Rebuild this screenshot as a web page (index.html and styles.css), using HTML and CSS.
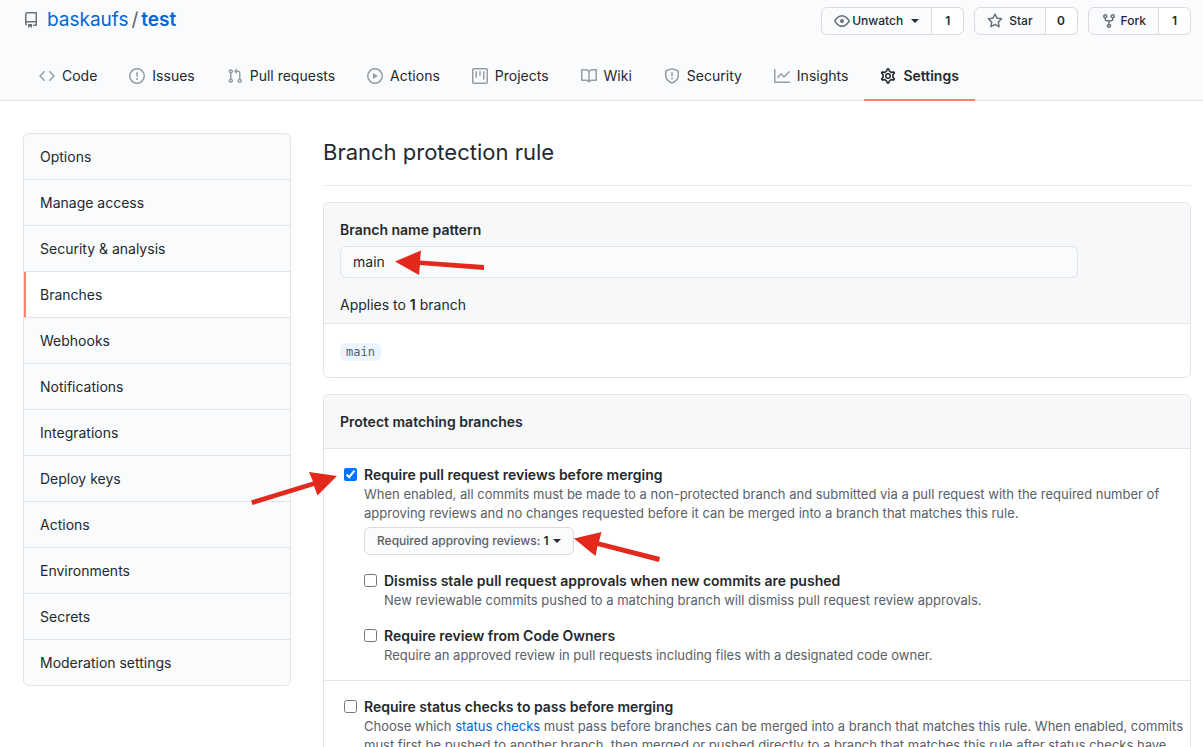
FILE: index.html
```html
<!DOCTYPE html>
<html lang="en">
<head>
<meta charset="utf-8">
<title>Branch protection rule · baskaufs/test</title>
<link rel="stylesheet" href="styles.css">
</head>
<body>
<header class="repo-header">
  <div class="repo-bar">
    <div class="repo-title">
      <svg class="icon repo-icon" viewBox="0 0 16 16"><path d="M2 2.5A2.5 2.5 0 014.5 0h8.75a.75.75 0 01.75.75v12.5a.75.75 0 01-.75.75h-2.5a.75.75 0 110-1.5h1.75v-2h-8a1 1 0 00-.714 1.7.75.75 0 01-1.072 1.05A2.495 2.495 0 012 11.5v-9zm10.5-1V9h-8c-.356 0-.694.074-1 .208V2.5a1 1 0 011-1h8zM5 12.25v3.25a.25.25 0 00.4.2l1.45-1.087a.25.25 0 01.3 0L8.6 15.7a.25.25 0 00.4-.2v-3.25a.25.25 0 00-.25-.25h-3.5a.25.25 0 00-.25.25z"/></svg>
      <a href="#">baskaufs</a><span class="slash">/</span><a class="repo-name" href="#">test</a>
    </div>
    <div class="repo-actions">
      <div class="btn-group"><button class="btn watch" type="button"><svg class="icon" viewBox="0 0 16 16"><path d="M1.679 7.932c.412-.621 1.242-1.75 2.366-2.717C5.175 4.242 6.527 3.5 8 3.5c1.473 0 2.824.742 3.955 1.715 1.124.967 1.954 2.096 2.366 2.717a.119.119 0 010 .136c-.412.621-1.242 1.75-2.366 2.717C10.825 11.758 9.473 12.5 8 12.5c-1.473 0-2.824-.742-3.955-1.715C2.92 9.818 2.09 8.69 1.679 8.068a.119.119 0 010-.136zM8 2c-1.981 0-3.67.992-4.933 2.078C1.797 5.169.88 6.423.43 7.1a1.619 1.619 0 000 1.798c.45.678 1.367 1.932 2.637 3.024C4.329 13.008 6.019 14 8 14c1.981 0 3.67-.992 4.933-2.078 1.27-1.091 2.187-2.345 2.637-3.023a1.619 1.619 0 000-1.798c-.45-.678-1.367-1.932-2.637-3.023C11.671 2.992 9.981 2 8 2zm0 8a2 2 0 100-4 2 2 0 000 4z"/></svg>Unwatch<span class="caret"></span></button><a class="count" href="#">1</a></div>
      <div class="btn-group"><button class="btn star" type="button"><svg class="icon" viewBox="0 0 16 16"><path d="M8 .25a.75.75 0 01.673.418l1.882 3.815 4.21.612a.75.75 0 01.416 1.279l-3.046 2.97.719 4.192a.75.75 0 01-1.088.791L8 12.347l-3.766 1.98a.75.75 0 01-1.088-.79l.72-4.194L.818 6.374a.75.75 0 01.416-1.28l4.21-.611L7.327.668A.75.75 0 018 .25zm0 2.445L6.615 5.5a.75.75 0 01-.564.41l-3.097.45 2.24 2.184a.75.75 0 01.216.664l-.528 3.084 2.769-1.456a.75.75 0 01.698 0l2.77 1.456-.53-3.084a.75.75 0 01.216-.664l2.24-2.183-3.096-.45a.75.75 0 01-.564-.41L8 2.694v.001z"/></svg>Star</button><a class="count" href="#">0</a></div>
      <div class="btn-group"><button class="btn fork" type="button"><svg class="icon" viewBox="0 0 16 16"><path d="M5 3.25a.75.75 0 11-1.5 0 .75.75 0 011.5 0zm0 2.122a2.25 2.25 0 10-1.5 0v.878A2.25 2.25 0 005.75 8.5h1.5v2.128a2.251 2.251 0 101.5 0V8.5h1.5a2.25 2.25 0 002.25-2.25v-.878a2.25 2.25 0 10-1.5 0v.878a.75.75 0 01-.75.75h-4.5A.75.75 0 015 6.25v-.878zm3.75 7.378a.75.75 0 11-1.5 0 .75.75 0 011.5 0zm3-8.75a.75.75 0 100-1.5.75.75 0 000 1.5z"/></svg>Fork</button><a class="count" href="#">1</a></div>
    </div>
  </div>
  <nav class="tabs" aria-label="Repository">
    <a class="tab" href="#"><svg class="icon" viewBox="0 0 16 16"><path d="M4.72 3.22a.75.75 0 011.06 1.06L2.06 8l3.72 3.72a.75.75 0 11-1.06 1.06L.47 8.53a.75.75 0 010-1.06l4.25-4.25zm6.56 0a.75.75 0 10-1.06 1.06L13.94 8l-3.72 3.72a.75.75 0 101.06 1.06l4.25-4.25a.75.75 0 000-1.06l-4.25-4.25z"/></svg>Code</a>
    <a class="tab" href="#"><svg class="icon" viewBox="0 0 16 16"><path d="M8 1.5a6.5 6.5 0 100 13 6.5 6.5 0 000-13zM0 8a8 8 0 1116 0A8 8 0 010 8zm9 3a1 1 0 11-2 0 1 1 0 012 0zm-.25-6.25a.75.75 0 00-1.5 0v3.5a.75.75 0 001.5 0v-3.5z"/></svg>Issues</a>
    <a class="tab" href="#"><svg class="icon" viewBox="0 0 16 16"><path d="M7.177 3.073L9.573.677A.25.25 0 0110 .854v4.792a.25.25 0 01-.427.177L7.177 3.427a.25.25 0 010-.354zM3.75 2.5a.75.75 0 100 1.5.75.75 0 000-1.5zm-2.25.75a2.25 2.25 0 113 2.122v5.256a2.251 2.251 0 11-1.5 0V5.372A2.25 2.25 0 011.5 3.25zM11 2.5h-1V4h1a1 1 0 011 1v5.628a2.251 2.251 0 101.5 0V5A2.5 2.5 0 0011 2.5zm1 10.25a.75.75 0 111.5 0 .75.75 0 01-1.5 0zM3.75 12a.75.75 0 100 1.5.75.75 0 000-1.5z"/></svg>Pull requests</a>
    <a class="tab" href="#"><svg class="icon" viewBox="0 0 16 16"><path d="M1.5 8a6.5 6.5 0 1113 0 6.5 6.5 0 01-13 0zM8 0a8 8 0 100 16A8 8 0 008 0zM6.379 5.227A.25.25 0 006 5.442v5.117a.25.25 0 00.379.214l4.264-2.559a.25.25 0 000-.428L6.379 5.227z"/></svg>Actions</a>
    <a class="tab" href="#"><svg class="icon" viewBox="0 0 16 16"><path d="M1.75 0A1.75 1.75 0 000 1.75v12.5C0 15.216.784 16 1.75 16h12.5A1.75 1.75 0 0016 14.25V1.75A1.75 1.75 0 0014.25 0H1.75zM1.5 1.75a.25.25 0 01.25-.25h12.5a.25.25 0 01.25.25v12.5a.25.25 0 01-.25.25H1.75a.25.25 0 01-.25-.25V1.75zM11.75 3a.75.75 0 00-.75.75v7.5a.75.75 0 001.5 0v-7.5a.75.75 0 00-.75-.75zm-8.25.75a.75.75 0 011.5 0v5.5a.75.75 0 01-1.5 0v-5.5zM8 3a.75.75 0 00-.75.75v3.5a.75.75 0 001.5 0v-3.5A.75.75 0 008 3z"/></svg>Projects</a>
    <a class="tab" href="#"><svg class="icon" viewBox="0 0 16 16"><path d="M0 1.75A.75.75 0 01.75 1h4.253c1.227 0 2.317.59 3 1.501A3.744 3.744 0 0111.006 1h4.245a.75.75 0 01.75.75v10.5a.75.75 0 01-.75.75h-4.507a2.25 2.25 0 00-1.591.659l-.622.621a.75.75 0 01-1.06 0l-.622-.621A2.25 2.25 0 005.258 13H.75a.75.75 0 01-.75-.75V1.75zm8.755 3a2.25 2.25 0 012.25-2.25H14.5v9h-3.757c-.71 0-1.4.201-1.992.572l.004-7.322zm-1.504 7.324l.004-5.073-.002-2.253A2.25 2.25 0 005.003 2.5H1.5v9h3.757a3.75 3.75 0 011.994.574z"/></svg>Wiki</a>
    <a class="tab" href="#"><svg class="icon" viewBox="0 0 16 16"><path d="M7.467.133a1.75 1.75 0 011.066 0l5.25 1.68A1.75 1.75 0 0115 3.48V7c0 1.566-.32 3.182-1.303 4.682-.983 1.498-2.585 2.813-5.032 3.855a1.7 1.7 0 01-1.33 0c-2.447-1.042-4.049-2.357-5.032-3.855C1.32 10.182 1 8.566 1 7V3.48a1.75 1.75 0 011.217-1.667l5.25-1.68zm.61 1.429a.25.25 0 00-.153 0l-5.25 1.68a.25.25 0 00-.174.238V7c0 1.358.275 2.666 1.057 3.86.784 1.194 2.121 2.34 4.366 3.297a.2.2 0 00.154 0c2.245-.956 3.582-2.104 4.366-3.298C13.225 9.666 13.5 8.36 13.5 7V3.48a.25.25 0 00-.174-.237l-5.25-1.68zM9 10.5a1 1 0 11-2 0 1 1 0 012 0zm-.25-5.75a.75.75 0 10-1.5 0v3a.75.75 0 001.5 0v-3z"/></svg>Security</a>
    <a class="tab" href="#"><svg class="icon" viewBox="0 0 16 16"><path d="M1.5 1.75a.75.75 0 00-1.5 0v12.5c0 .414.336.75.75.75h14.5a.75.75 0 000-1.5H1.5V1.75zm14.28 2.53a.75.75 0 00-1.06-1.06L10 7.94 7.53 5.47a.75.75 0 00-1.06 0L3.22 8.72a.75.75 0 001.06 1.06L7 7.06l2.47 2.47a.75.75 0 001.06 0l5.25-5.25z"/></svg>Insights</a>
    <a class="tab selected" href="#" aria-current="page"><svg class="icon gear" viewBox="0 0 16 16"><path transform="translate(8 8) scale(1.08) translate(-8 -8)" d="M7.429 1.525a6.593 6.593 0 011.142 0c.036.003.108.036.137.146l.289 1.105c.147.56.55.967.997 1.189.174.086.341.183.501.29.417.278.97.423 1.53.27l1.102-.303c.11-.03.175.016.195.046.219.31.41.641.573.989.014.031.022.11-.059.19l-.815.806c-.411.406-.562.957-.53 1.456a4.588 4.588 0 010 .582c-.032.499.119 1.05.53 1.456l.815.806c.08.08.073.159.059.19a6.494 6.494 0 01-.573.99c-.02.029-.086.074-.195.045l-1.103-.303c-.559-.153-1.112-.008-1.529.27-.16.107-.327.204-.5.29-.449.222-.851.628-.998 1.189l-.289 1.105c-.029.11-.101.143-.137.146a6.613 6.613 0 01-1.142 0c-.036-.003-.108-.037-.137-.146l-.289-1.105c-.147-.56-.55-.967-.997-1.189a4.502 4.502 0 01-.501-.29c-.417-.278-.97-.423-1.53-.27l-1.102.303c-.11.03-.175-.016-.195-.046a6.492 6.492 0 01-.573-.989c-.014-.031-.022-.11.059-.19l.815-.806c.411-.406.562-.957.53-1.456a4.587 4.587 0 010-.582c.032-.499-.119-1.05-.53-1.456l-.815-.806c-.08-.08-.073-.159-.059-.19a6.44 6.44 0 01.573-.99c.02-.029.086-.075.195-.045l1.103.303c.559.153 1.112.008 1.529-.27.16-.107.327-.204.5-.29.449-.222.851-.628.998-1.189l.289-1.105c.029-.11.101-.143.137-.146z"/><circle cx="8" cy="8" r="2.25"/></svg>Settings</a>
  </nav>
</header>

<div class="layout">
  <nav class="menu" aria-label="Settings">
    <a href="#">Options</a>
    <a href="#">Manage access</a>
    <a href="#">Security &amp; analysis</a>
    <a class="current" href="#" aria-current="page">Branches</a>
    <a href="#">Webhooks</a>
    <a href="#">Notifications</a>
    <a href="#">Integrations</a>
    <a href="#">Deploy keys</a>
    <a href="#">Actions</a>
    <a href="#">Environments</a>
    <a href="#">Secrets</a>
    <a href="#">Moderation settings</a>
  </nav>

  <main class="content">
    <h1>Branch protection rule</h1>

    <section class="box">
      <div class="box-head pattern">
        <label for="pattern">Branch name pattern</label>
        <input id="pattern" class="text-input" type="text" value="main">
        <p>Applies to <strong>1</strong> branch</p>
      </div>
      <div class="box-row matches"><code class="branch">main</code></div>
    </section>

    <section class="box">
      <div class="box-head"><h2>Protect matching branches</h2></div>
      <div class="box-row rule">
        <input id="reviews" type="checkbox" checked>
        <div class="rule-body">
          <label for="reviews">Require pull request reviews before merging</label>
          <p class="note">When enabled, all commits must be made to a non-protected branch and submitted via a pull request with the required number of approving reviews and no changes requested before it can be merged into a branch that matches this rule.</p>
          <button class="btn approvals" type="button"><span>Required approving reviews: <strong>1</strong></span><span class="caret"></span></button>
          <div class="rule nested">
            <input id="stale" type="checkbox">
            <div class="rule-body">
              <label for="stale">Dismiss stale pull request approvals when new commits are pushed</label>
              <p class="note">New reviewable commits pushed to a matching branch will dismiss pull request review approvals.</p>
            </div>
          </div>
          <div class="rule nested">
            <input id="owners" type="checkbox">
            <div class="rule-body">
              <label for="owners">Require review from Code Owners</label>
              <p class="note">Require an approved review in pull requests including files with a designated code owner.</p>
            </div>
          </div>
        </div>
      </div>
      <div class="box-row rule">
        <input id="checks" type="checkbox">
        <div class="rule-body">
          <label for="checks">Require status checks to pass before merging</label>
          <p class="note">Choose which <a href="#">status checks</a> must pass before branches can be merged into a branch that matches this rule. When enabled, commits must first be pushed to another branch, then merged or pushed directly to a branch that matches this rule after status checks have passed.</p>
        </div>
      </div>
    </section>
  </main>
</div>

<svg class="arrows" width="1203" height="747" viewBox="0 0 1203 747" aria-hidden="true">
  <path d="M395 261.500L421 250.500L420 260.500L484 265V270L420 265L419 275Z"/>
  <path d="M337 476L309 472L313 481.500L251 500.500L252.500 505L314 486L317.500 495.500Z"/>
  <path d="M574 538.500L601.500 532L599 541.500L660 557L659 562L597.500 546L595.500 556Z"/>
</svg>
</body>
</html>
```
FILE: styles.css
```css
* { box-sizing: border-box; }

body {
  margin: 0;
  height: 100vh;
  overflow: hidden;
  background: #fff;
  color: #24292e;
  font: 14px/20px Inter, "Liberation Sans", sans-serif;
}

h1, h2, p { margin: 0; }
a { color: #0366d6; text-decoration: none; }
strong, label { font-weight: 600; }
.icon { width: 16px; height: 16px; flex: none; fill: currentColor; fill-rule: evenodd; }

.repo-header {
  display: flex;
  flex-direction: column;
  gap: 17px;
  background: #fafbfc;
  border-bottom: 1px solid #e1e4e8;
}
.repo-bar {
  display: flex;
  justify-content: space-between;
  align-items: flex-start;
  padding: 7px 12px 0 23px;
}
.repo-title {
  display: flex;
  align-items: center;
  font-size: 19px;
  line-height: 26px;
}
.repo-icon { margin-right: 8px; color: #6a737d; }
.slash { margin: 0 3px; color: #586069; }
.repo-name { font-weight: 600; }

.repo-actions { display: flex; gap: 10px; }
.btn-group { display: flex; }
.btn {
  display: flex;
  align-items: center;
  height: 28px;
  padding: 0 12px;
  border: 1px solid #d9dbde;
  border-radius: 6px;
  background: #fafbfc;
  color: #24292e;
  font: 500 12px/20px Inter, "Liberation Sans", sans-serif;
}
.btn .icon { color: #6a737d; }
.btn-group .btn { border-radius: 6px 0 0 6px; }
.btn.watch .icon { margin-right: 2px; }
.btn.star .icon { margin-right: 6px; }
.btn.fork .icon { margin-right: 4px; }
.count {
  min-width: 32px;
  padding: 3px 11px;
  border: 1px solid #d9dbde;
  border-left: 0;
  border-radius: 0 6px 6px 0;
  background: #fff;
  color: #24292e;
  font-size: 12px;
  font-weight: 600;
  text-align: center;
}
.caret {
  margin-left: 8px;
  border: 4px solid transparent;
  border-top-color: currentColor;
  border-bottom: 0;
}

.tabs { display: flex; padding-left: 23px; margin-bottom: -1px; }
.tab {
  display: flex;
  align-items: center;
  gap: 7px;
  padding: 14px 16px 13px;
  border-bottom: 2px solid transparent;
  color: #24292e;
}
.tab .icon { color: #959da5; }
.tab.selected { border-bottom-color: #f9826c; font-weight: 600; }
.tab .gear { fill: none; stroke: #24292e; stroke-width: 1.5; }

.layout {
  display: flex;
  align-items: flex-start;
  gap: 32px;
  padding: 32px 12px 0 23px;
}
.menu {
  flex: 0 0 268px;
  border: 1px solid #e1e4e8;
  border-radius: 6px;
  background: #fafbfc;
  overflow: hidden;
}
.menu a {
  display: block;
  padding: 13px 16px 12px;
  border-bottom: 1px solid #e1e4e8;
  color: #24292e;
}
.menu a:last-child { border-bottom: 0; }
.menu .current {
  background: #fff;
  box-shadow: inset 2px 0 #f9826c;
}

.content { flex: 1; min-width: 0; }
.content h1 {
  padding-bottom: 14px;
  margin-bottom: 16px;
  border-bottom: 1px solid #eaecef;
  font-size: 22px;
  font-weight: 400;
  line-height: 38px;
}
.box { margin-bottom: 16px; border: 1px solid #e1e4e8; border-radius: 6px; }
.box-head {
  padding: 17px 16px 16px;
  border-radius: 6px 6px 0 0;
  background: #f6f8fa;
}
.box-head h2 { font-size: 14px; font-weight: 600; line-height: 20px; }
.box-row { border-top: 1px solid #e1e4e8; }
.pattern { padding-bottom: 8px; }
.text-input {
  display: block;
  width: 738px;
  max-width: 100%;
  height: 32px;
  margin: 6px 0 17px;
  padding: 0 12px 2px;
  border: 1px solid #e1e4e8;
  border-radius: 6px;
  background: #fafbfc;
  color: inherit;
  font: inherit;
}
.matches { padding: 17px 16px 16px; }
.branch {
  display: inline-block;
  padding: 0 6px;
  border-radius: 6px;
  background: #eaf5ff;
  color: #586069;
  font: 12px/18px "DejaVu Sans Mono", monospace;
}

.rule { display: flex; align-items: flex-start; gap: 7px; }
.rule > input { flex: none; width: 13px; height: 13px; margin: 3px 0 0; }
.box-row.rule { padding: 16px 2px 15px 20px; }
.rule-body { flex: 1; min-width: 0; }
.rule label { display: block; }
.note { color: #586069; font-size: 13px; line-height: 19px; }
.btn.approvals { margin: 4px 0 16px; color: #586069; }
.approvals strong, .approvals .caret { color: #24292e; }
.approvals .caret { margin-left: 4px; }
.nested { margin-bottom: 16px; }
.nested:last-child { margin-bottom: 0; }

.arrows {
  position: absolute;
  top: 0;
  left: 0;
  fill: #e3291b;
  pointer-events: none;
}
```
